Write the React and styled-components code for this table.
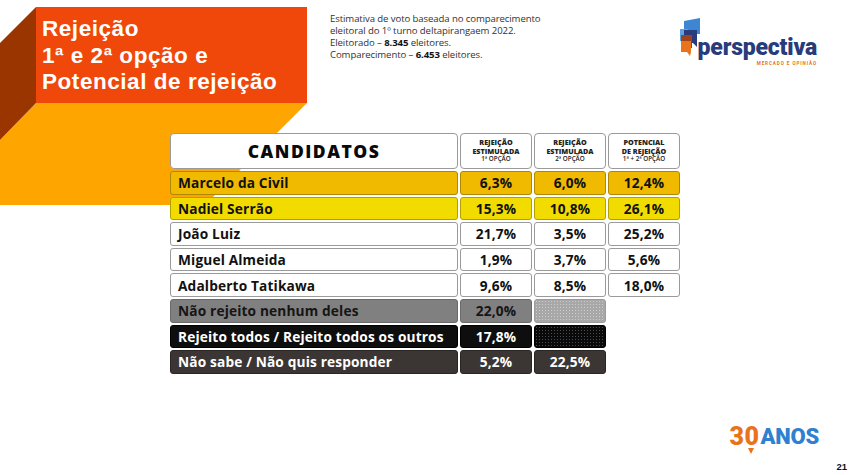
import React from "react";
import styled, { createGlobalStyle } from "styled-components";

const Global = createGlobalStyle`
  html, body { margin: 0; padding: 0; background: #fff; }
  #root { width: 851px; height: 475px; }
`;

const Page = styled.div`
  position: relative;
  z-index: 0;
  width: 851px;
  height: 475px;
  overflow: hidden;
  background: #fff;
  display: flex;
  flex-direction: column;
  font-family: "Open Sans", "Noto Sans", sans-serif;
`;

const Decor = styled.svg`
  position: absolute;
  left: 0;
  top: 0;
  z-index: 0;
`;

const TopBar = styled.header`
  position: relative;
  z-index: 1;
  display: flex;
  align-items: flex-start;
  height: 133px;
  box-sizing: border-box;
  padding-top: 7px;
  padding-left: 36px;
`;

const TitleBox = styled.h1`
  margin: 0;
  width: 271px;
  height: 96px;
  box-sizing: border-box;
  padding: 9px 0 0 6px;
  background: #f0470a;
  color: #fff;
  font-family: "Liberation Sans", Arial, sans-serif;
  font-weight: 700;
  font-size: 22.5px;
  line-height: 26.5px;
  letter-spacing: 0.55px;
`;

const TitleLine = styled.span`
  display: block;
`;

const Notes = styled.div`
  margin: 6px 0 0 23px;
  font-family: "Open Sans", sans-serif;
  font-size: 9.6px;
  line-height: 12px;
  color: #333;
  letter-spacing: -0.1px;
  b { color: #111; font-weight: 700; }
`;

const Brand = styled.div`
  margin: 11px 34px 0 auto;
  display: flex;
  align-items: flex-start;
`;

const BrandText = styled.div`
  margin: 15.5px 0 0 -3px;
  display: flex;
  flex-direction: column;
  align-items: flex-end;
`;

const BrandName = styled.span`
  font-family: Roboto, sans-serif;
  font-weight: 900;
  font-size: 23px;
  line-height: 27px;
  letter-spacing: -0.2px;
  color: #283b7b;
`;

const BrandTag = styled.span`
  font-family: Roboto, sans-serif;
  font-weight: 700;
  font-size: 4.6px;
  letter-spacing: 0.9px;
  color: #e8731c;
  line-height: 5px;
`;

const Table = styled.section`
  position: relative;
  z-index: 1;
  margin-left: 170px;
  display: flex;
  flex-direction: column;
  gap: 2px;
  width: 510px;
`;

const Row = styled.div`
  display: grid;
  grid-template-columns: 288px 72px 72px 72px;
  column-gap: 2px;
  height: ${(p) => (p.$head ? "36px" : "23.6px")};
`;

const tones = {
  white: { bg: "#ffffff", bd: "#9a9a9a", fg: "#111" },
  gold: { bg: "#f0ba00", bd: "#b08700", fg: "#111" },
  yellow: { bg: "#f2dc00", bd: "#b3a100", fg: "#111" },
  gray: { bg: "#808080", bd: "#6a6a6a", fg: "#151515" },
  black: { bg: "#0e0e0e", bd: "#000", fg: "#fff" },
  dark: { bg: "#3b3634", bd: "#2a2624", fg: "#fff" },
};

const patterns = {
  light: `
    background-color: #a8a8a8;
    background-image: radial-gradient(circle, #cdcdcd 0.55px, transparent 0.9px);
    background-size: 3px 3px;
    border-color: #9a9a9a;
  `,
  dark: `
    background-color: #0a0a0a;
    background-image: radial-gradient(circle, #4c4c4c 0.55px, transparent 0.9px);
    background-size: 3px 3px;
    border-color: #000;
  `,
};

const Cell = styled.div`
  box-sizing: border-box;
  border: 1px solid ${(p) => tones[p.$tone].bd};
  border-radius: 3px;
  background: ${(p) => tones[p.$tone].bg};
  color: ${(p) => tones[p.$tone].fg};
  display: flex;
  align-items: center;
  justify-content: ${(p) => (p.$name ? "flex-start" : "center")};
  padding-left: ${(p) => (p.$name ? "7px" : "0")};
  font-weight: 700;
  font-size: 13.7px;
  letter-spacing: 0.15px;
  white-space: nowrap;
  ${(p) => (p.$pattern ? patterns[p.$pattern] : "")}
`;

const HeadCell = styled.div`
  box-sizing: border-box;
  border: 1px solid #9a9a9a;
  border-radius: 4px;
  background: #fff;
  color: #111;
  display: flex;
  flex-direction: column;
  align-items: center;
  justify-content: center;
  text-align: center;
`;

const HeadTitle = styled.span`
  font-weight: 800;
  font-size: 17.5px;
  letter-spacing: 1.5px;
  color: #0a0a0a;
`;

const HeadLine = styled.span`
  font-weight: 800;
  font-size: 7.2px;
  line-height: 8.6px;
  color: #222;
`;

const HeadSub = styled.span`
  font-weight: 600;
  font-size: 6.3px;
  line-height: 8.6px;
  color: #222;
`;

const Footer = styled.footer`
  margin-top: auto;
  display: flex;
  flex-direction: column;
  align-items: flex-end;
  padding: 0 4px 3px 0;
`;

const Anos = styled.div`
  margin-right: 28px;
  display: flex;
  align-items: center;
  font-family: Roboto, "Liberation Sans", sans-serif;
  font-weight: 900;
  font-size: 22px;
  line-height: 22px;
  letter-spacing: -0.2px;
`;

const Thirty = styled.span`
  color: #e8731c;
  font-size: 25px;
  letter-spacing: 0.5px;
`;

const Zero = styled.span`
  position: relative;
  &::after {
    content: "";
    position: absolute;
    left: 4px;
    bottom: -3px;
    border-left: 3px solid transparent;
    border-right: 3px solid transparent;
    border-top: 6px solid #e8731c;
  }
`;

const AnosWord = styled.span`
  color: #2f80d0;
  margin-left: 1px;
`;

const PageNum = styled.span`
  margin-top: 14px;
  font-family: "Liberation Sans", Arial, sans-serif;
  font-weight: 700;
  font-size: 9.5px;
  line-height: 10px;
  color: #111;
`;

const rows = [
  { name: "Marcelo da Civil", v: ["6,3%", "6,0%", "12,4%"], tone: "gold" },
  { name: "Nadiel Serrão", v: ["15,3%", "10,8%", "26,1%"], tone: "yellow" },
  { name: "João Luiz", v: ["21,7%", "3,5%", "25,2%"], tone: "white" },
  { name: "Miguel Almeida", v: ["1,9%", "3,7%", "5,6%"], tone: "white" },
  { name: "Adalberto Tatikawa", v: ["9,6%", "8,5%", "18,0%"], tone: "white" },
  { name: "Não rejeito nenhum deles", v: ["22,0%", null], tone: "gray", pattern: "light" },
  { name: "Rejeito todos / Rejeito todos os outros", v: ["17,8%", null], tone: "black", pattern: "dark" },
  { name: "Não sabe / Não quis responder", v: ["5,2%", "22,5%"], tone: "dark" },
];

function BrandIcon() {
  return (
    <svg width="22" height="38" viewBox="0 0 22 38">
      <polygon points="5,3 21,0 21,16 5,16" fill="#3d86d4" />
      <rect x="1" y="11" width="8" height="12" fill="#5ea3e2" />
      <rect x="5" y="12" width="13" height="13" fill="#2b3c7c" />
      <polygon points="14,25 18,25 18,29" fill="#2b3c7c" />
      <rect x="2" y="17" width="11" height="13" fill="#9e431b" />
      <rect x="2" y="23" width="10" height="11" fill="#e9741c" />
      <polygon points="8,34 12,34 11,38" fill="#e9741c" />
    </svg>
  );
}

export default function App() {
  return (
    <Page>
      <Global />
      <Decor width="310" height="210" viewBox="0 0 310 210">
        <polygon points="36,103 307,103 205,205 0,205 0,140" fill="#fea500" />
        <polygon points="0,43 36,7 36,103 0,140" fill="#9b3500" />
      </Decor>
      <TopBar>
        <TitleBox>
          <TitleLine>Rejeição</TitleLine>
          <TitleLine>1ª e 2ª opção e</TitleLine>
          <TitleLine>Potencial de rejeição</TitleLine>
        </TitleBox>
        <Notes>
          Estimativa de voto baseada no comparecimento
          <br />
          eleitoral do 1º turno deItapirangaem 2022.
          <br />
          Eleitorado – <b>8.345</b> eleitores.
          <br />
          Comparecimento – <b>6.453</b> eleitores.
        </Notes>
        <Brand>
          <BrandIcon />
          <BrandText>
            <BrandName>perspectiva</BrandName>
            <BrandTag>MERCADO E OPINIÃO</BrandTag>
          </BrandText>
        </Brand>
      </TopBar>
      <Table>
        <Row $head>
          <HeadCell>
            <HeadTitle>CANDIDATOS</HeadTitle>
          </HeadCell>
          <HeadCell>
            <HeadLine>REJEIÇÃO</HeadLine>
            <HeadLine>ESTIMULADA</HeadLine>
            <HeadSub>1ª OPÇÃO</HeadSub>
          </HeadCell>
          <HeadCell>
            <HeadLine>REJEIÇÃO</HeadLine>
            <HeadLine>ESTIMULADA</HeadLine>
            <HeadSub>2ª OPÇÃO</HeadSub>
          </HeadCell>
          <HeadCell>
            <HeadLine>POTENCIAL</HeadLine>
            <HeadLine>DE REJEIÇÃO</HeadLine>
            <HeadSub>1ª + 2ª OPÇÃO</HeadSub>
          </HeadCell>
        </Row>
        {rows.map((r) => (
          <Row key={r.name}>
            <Cell $tone={r.tone} $name>
              {r.name}
            </Cell>
            {r.v.map((val, i) => (
              <Cell
                key={i}
                $tone={r.tone}
                $pattern={val === null ? r.pattern : undefined}
              >
                {val}
              </Cell>
            ))}
          </Row>
        ))}
      </Table>
      <Footer>
        <Anos>
          <Thirty>
            3<Zero>0</Zero>
          </Thirty>
          <AnosWord>ANOS</AnosWord>
        </Anos>
        <PageNum>21</PageNum>
      </Footer>
    </Page>
  );
}
